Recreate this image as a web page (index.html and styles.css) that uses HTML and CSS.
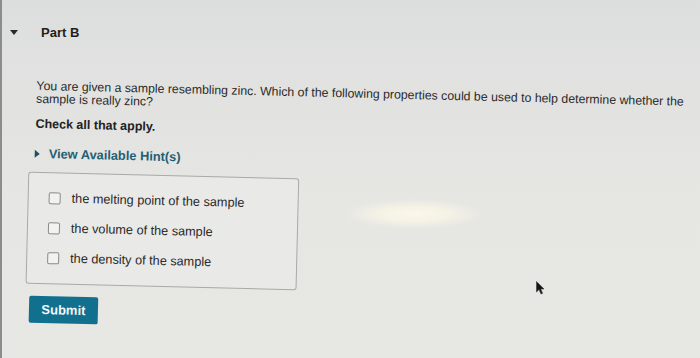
FILE: index.html
```html
<!DOCTYPE html>
<html lang="en">
<head>
    <meta charset="UTF-8">
    <meta name="viewport" content="width=device-width, initial-scale=1.0">
    <title>Part B</title>
    <link rel="stylesheet" href="styles.css">
</head>
<body>

<div class="page">
    <div class="part-header">
        <span class="caret-down"></span>
        <span class="part-title">Part B</span>
    </div>

    <!-- photo of the screen is a little tilted, so the body is rotated slightly -->
    <div class="part-body">
        <p class="question">You are given a sample resembling zinc. Which of the following properties could be used to help determine whether the sample is really zinc?</p>
        <p class="instruction">Check all that apply.</p>

        <div class="hint">
            <span class="caret-right"></span>
            <span>View Available Hint(s)</span>
        </div>

        <div class="options">
            <label class="option"><span class="box"></span>the melting point of the sample</label>
            <label class="option"><span class="box"></span>the volume of the sample</label>
            <label class="option"><span class="box"></span>the density of the sample</label>
        </div>

        <button class="submit-btn">Submit</button>
    </div>

    <svg class="cursor" width="9" height="14" viewBox="0 0 9 14">
        <path d="M0.5 0.5 L0.5 11 L3 8.6 L5 13 L6.6 12.3 L4.7 8 L8 8 Z" fill="#151515" stroke="#3a3a3a" stroke-width="0.6"/>
    </svg>
</div>

</body>
</html>
```

FILE: styles.css
```css
body {
    margin: 0;
    padding: 0;
    font-family: "Liberation Sans", Arial, sans-serif;
    color: #222;
    background: #e3e4e2;
}
.page {
    position: relative;
    height: 358px;
    border-left: 2px solid #8c8c8c;
    box-sizing: border-box;
    background:
        radial-gradient(ellipse 70px 15px at 412px 214px, #fbf8ea 0, #f6f3e6 45%, rgba(236, 235, 230, 0) 100%),
        linear-gradient(180deg, #dcdedd 0, #e0e1e0 60px, #e6e6e3 200px, #e7e7e4 100%);
    overflow: hidden;
}
.part-header {
    display: flex;
    align-items: center;
    height: 64px;
    padding-left: 8px;
}
.caret-down {
    width: 0;
    height: 0;
    border-left: 4px solid transparent;
    border-right: 4px solid transparent;
    border-top: 5px solid #2a2a2a;
    margin-right: 23px;
}
.part-title {
    font-size: 13px;
    font-weight: bold;
    color: #1e1e1e;
}
.part-body {
    padding: 15px 0 0 32px;
    transform: rotate(1.4deg);
    transform-origin: 0 120px;
}
.question {
    margin: 0;
    font-size: 12.3px;
    line-height: 13px;
    color: #2a2a2a;
    width: 660px;
}
.instruction {
    margin: 12px 0 0;
    font-size: 12.5px;
    line-height: 13px;
    font-weight: bold;
    color: #222;
}
.hint {
    display: flex;
    align-items: center;
    margin-top: 15px;
    font-size: 12.8px;
    font-weight: bold;
    color: #1f5f73;
}
.caret-right {
    width: 0;
    height: 0;
    border-top: 4px solid transparent;
    border-bottom: 4px solid transparent;
    border-left: 5px solid #1f4f60;
    margin-right: 9px;
}
.options {
    width: 271px;
    margin: 11px 0 0 -6px;
    padding: 18px 0 18px 20px;
    box-sizing: border-box;
    border: 1px solid #a9a9a7;
    border-radius: 3px;
    background: #e9e9e7;
    display: flex;
    flex-direction: column;
    gap: 16px;
}
.option {
    display: flex;
    align-items: center;
    height: 14px;
    font-size: 12.7px;
    color: #2a2a2a;
}
.box {
    width: 10px;
    height: 10px;
    border: 1px solid #8a8a8a;
    border-radius: 2px;
    background: #f2f2f0;
    margin-right: 11px;
}
.submit-btn {
    margin: 12px 0 0 -2px;
    padding: 0 10px;
    height: 27px;
    width: 69px;
    border: none;
    border-radius: 2px;
    background: #12708f;
    color: #f4f7f8;
    font-family: "Liberation Sans", Arial, sans-serif;
    font-size: 13px;
    font-weight: bold;
}
.cursor {
    position: absolute;
    left: 534px;
    top: 281px;
}
```
